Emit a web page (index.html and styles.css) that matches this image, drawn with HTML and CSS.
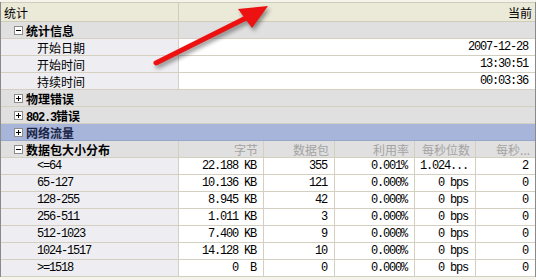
FILE: index.html
```html
<!DOCTYPE html>
<html>

<head>
  <title>统计</title>
  <link rel="stylesheet" href="styles.css">
</head>

<body>
  <div class="panel">
    <table class="stats">
      <colgroup>
        <col class="c-name">
        <col class="c-bytes">
        <col class="c-packets">
        <col class="c-util">
        <col class="c-bps">
        <col class="c-pps">
      </colgroup>
      <thead>
        <tr>
          <th class="name">统计</th>
          <th class="current" colspan="5">当前</th>
        </tr>
      </thead>
      <tbody>
        <tr class="group">
          <td class="name"><span class="box"></span>统计信息</td>
          <td colspan="5"></td>
        </tr>
        <tr class="leaf">
          <td class="name">开始日期</td>
          <td class="num" colspan="5">2007-12-28</td>
        </tr>
        <tr class="leaf">
          <td class="name">开始时间</td>
          <td class="num" colspan="5">13:30:51</td>
        </tr>
        <tr class="leaf">
          <td class="name">持续时间</td>
          <td class="num" colspan="5">00:03:36</td>
        </tr>
        <tr class="group closed">
          <td colspan="6"><span class="box plus"></span>物理错误</td>
        </tr>
        <tr class="group closed">
          <td colspan="6"><span class="box plus"></span><span class="mono">802.3</span>错误</td>
        </tr>
        <tr class="group closed selected">
          <td colspan="6"><span class="box plus"></span>网络流量</td>
        </tr>
        <tr class="group columns">
          <td class="name"><span class="box"></span>数据包大小分布</td>
          <td class="head">字节</td>
          <td class="head">数据包</td>
          <td class="head">利用率</td>
          <td class="head">每秒位数</td>
          <td class="head">每秒...</td>
        </tr>
        <tr class="leaf">
          <td class="name mono">&lt;=64</td>
          <td class="num">22.188 KB</td>
          <td class="num">355</td>
          <td class="num">0.001%</td>
          <td class="num left">1.024...</td>
          <td class="num">2</td>
        </tr>
        <tr class="leaf">
          <td class="name mono">65-127</td>
          <td class="num">10.136 KB</td>
          <td class="num">121</td>
          <td class="num">0.000%</td>
          <td class="num">0 bps</td>
          <td class="num">0</td>
        </tr>
        <tr class="leaf">
          <td class="name mono">128-255</td>
          <td class="num">8.945 KB</td>
          <td class="num">42</td>
          <td class="num">0.000%</td>
          <td class="num">0 bps</td>
          <td class="num">0</td>
        </tr>
        <tr class="leaf">
          <td class="name mono">256-511</td>
          <td class="num">1.011 KB</td>
          <td class="num">3</td>
          <td class="num">0.000%</td>
          <td class="num">0 bps</td>
          <td class="num">0</td>
        </tr>
        <tr class="leaf">
          <td class="name mono">512-1023</td>
          <td class="num">7.400 KB</td>
          <td class="num">9</td>
          <td class="num">0.000%</td>
          <td class="num">0 bps</td>
          <td class="num">0</td>
        </tr>
        <tr class="leaf">
          <td class="name mono">1024-1517</td>
          <td class="num">14.128 KB</td>
          <td class="num">10</td>
          <td class="num">0.000%</td>
          <td class="num">0 bps</td>
          <td class="num">0</td>
        </tr>
        <tr class="leaf">
          <td class="name mono">&gt;=1518</td>
          <td class="num">0&nbsp;&nbsp;B</td>
          <td class="num">0</td>
          <td class="num">0.000%</td>
          <td class="num">0 bps</td>
          <td class="num">0</td>
        </tr>
      </tbody>
    </table>

    <!-- red pointer arrow drawn over the grid -->
    <svg class="arrow" width="536" height="280" viewBox="0 0 536 280">
      <line x1="156" y1="63" x2="252" y2="15" stroke="#ee1111" stroke-width="5" stroke-linecap="round" />
      <polygon points="268,6 238,9 252,28" fill="#ee1111" />
    </svg>
  </div>
</body>

</html>
```

FILE: styles.css
```css
* {
  box-sizing: border-box;
  margin: 0;
  padding: 0;
}

body {
  background-color: #d6d3c6;
  font-family: 'Noto Sans CJK SC', sans-serif;
  font-size: 12px;
  color: #000000;
}

.panel {
  position: relative;
  width: 536px;
  height: 280px;
  padding-top: 2px;
  background-color: #f4f3ec;
  overflow: hidden;
}

.stats {
  width: 536px;
  table-layout: fixed;
  border-collapse: separate;
  border-spacing: 0;
  border-left: 1px solid #8a8a8a;
  border-right: 1px solid #8a8a8a;
}

.c-name { width: 178px; }
.c-bytes { width: 85px; }
.c-packets { width: 71px; }
.c-util { width: 80px; }
.c-bps { width: 61px; }
.c-pps { width: 59px; }

thead tr {
  height: 20px;
}

th {
  height: 20px;
  background-color: #ebe9d8;
  font-weight: 400;
  border-top: 1px solid #cfccb9;
  border-bottom: 1px solid #cfccb9;
  line-height: 17px;
  padding-top: 1px;
}

th.name {
  text-align: left;
  padding-left: 3px;
  border-right: 1px solid #cfccb9;
}

th.current {
  text-align: right;
  padding-right: 3px;
}

tbody tr {
  height: 17px;
}

td {
  height: 17px;
  line-height: 15px;
  padding-top: 1px;
  white-space: nowrap;
  overflow: hidden;
  border-bottom: 1px solid #d3d0c1;
}

.group td {
  background-color: #e0e0e0;
  font-weight: 700;
  padding-left: 13px;
}

.group td.name {
  border-right: 1px solid #d3d0c1;
}

.group.closed td {
  border-right: none;
}

.group.selected td {
  background-color: #a7b5da;
  color: #1b2546;
  border-bottom-color: #98a6cb;
}

/* expand / collapse square */
.box {
  position: relative;
  display: inline-block;
  width: 9px;
  height: 9px;
  margin-top: 3px;
  margin-right: 3px;
  border: 1px solid #8c8c8c;
  background-color: #ffffff;
  vertical-align: top;
}

.box::before {
  content: '';
  position: absolute;
  left: 1px;
  top: 3px;
  width: 5px;
  height: 1px;
  background-color: #000000;
}

.box.plus::after {
  content: '';
  position: absolute;
  left: 3px;
  top: 1px;
  width: 1px;
  height: 5px;
  background-color: #000000;
}

.columns td.head {
  padding-left: 0;
  padding-right: 5px;
  text-align: right;
  font-weight: 400;
  color: #a3a3a3;
  border-right: 1px solid #d3d0c1;
}

.columns td.head:last-child {
  border-right: none;
}

.leaf td {
  background-color: #ffffff;
  border-right: 1px solid #d3d0c1;
}

.leaf td:last-child {
  border-right: none;
}

.leaf td.name {
  background-color: #eeeef2;
  padding-left: 36px;
}

.mono,
.num {
  font-family: 'Liberation Mono', monospace;
  letter-spacing: -1.2px;
}

span.mono {
  line-height: 10px;
}

.num {
  text-align: right;
  padding-right: 7px;
}

.num.left {
  text-align: left;
  padding-left: 5px;
}

.arrow {
  position: absolute;
  left: 0;
  top: 0;
  pointer-events: none;
  filter: drop-shadow(2px 3px 2px rgba(60, 60, 60, 0.55));
}
```
